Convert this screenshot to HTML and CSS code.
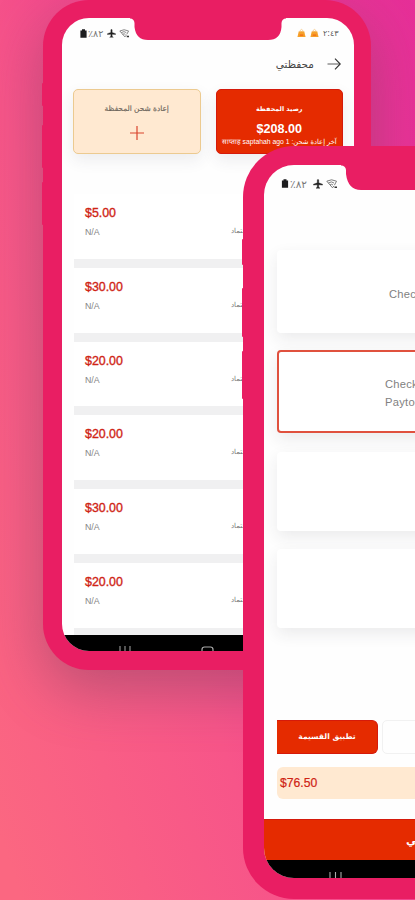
FILE: index.html
```html
<!DOCTYPE html>
<html lang="ar">
<head>
<meta charset="utf-8">
<title>محفظتي</title>
<link rel="stylesheet" href="styles.css">
</head>
<body>
<svg class="defs" width="0" height="0" aria-hidden="true">
  <symbol id="wifi" viewBox="0 0 12 10"><path d="M.8 2.200Q5.500 -.6 10.500 2.200L8.500 6M2.500 4Q5.500 1.800 8 4M4 6Q5.500 4.500 7 6M.8 2.200L6.500 8.800L8 6.800" fill="none" stroke="#666" stroke-width=".85"/><path d="M8.500 8.300H11" stroke="#333" stroke-width="1.600"/></symbol>
  <symbol id="plane" viewBox="0 0 10 10"><path d="M4.300 .8Q5 0 5.700 .8V3.800L9.500 5.200V6.100L5.700 5.700V8L7 9.200H3L4.300 8V5.700L.5 6.100V5.200L4.300 3.800Z" fill="#222" stroke="#222" stroke-width=".4"/></symbol>
  <symbol id="battery" viewBox="0 0 7 9"><path d="M2 .2H5V1.500H6.600V8.800H.4V1.500H2Z" fill="#1d1d1f"/></symbol>
  <symbol id="bag" viewBox="0 0 10 10"><path d="M2 3H8L9.500 9.500H.5Z" fill="#f6a12b"/><path d="M3.200 4V2.500Q5 -.5 6.800 2.500V4" fill="none" stroke="#f5c98a" stroke-width="1"/><path d="M3 7.300H7" stroke="#f36a16" stroke-width="1.500"/></symbol>
</svg>

<main class="stage">
  <section class="phone wallet">
    <i class="key k1"></i><i class="key k2"></i><i class="key k3"></i>
    <div class="screen">
      <svg class="notch" width="156" height="23" viewBox="0 0 156 23"><path d="M0 0H156V.5Q152 .5 151.500 5V9Q150.500 22 138 22H18Q6 22 4.500 9V5Q4 .5 0 .5Z" fill="#e91e63"/></svg>
      <div class="status">
        <div class="status-left"><svg class="i-bat"><use href="#battery"/></svg><span class="pct">٪٨٢</span><svg class="i-plane"><use href="#plane"/></svg><svg class="i-wifi"><use href="#wifi"/></svg></div>
        <div class="status-right"><svg class="i-bag"><use href="#bag"/></svg><svg class="i-bag"><use href="#bag"/></svg><span class="clock">٢:٤٣</span></div>
      </div>
      <header class="title">
        <span class="title-text" dir="rtl">محفظتي</span>
        <svg width="14" height="12" viewBox="0 0 14 12" fill="none" stroke="#333"><path d="M.5 6H13" stroke-width=".8"/><path d="M8 .7L13.200 6L8 11.300" stroke-width="1.150"/></svg>
      </header>
      <div class="tiles">
        <div class="tile topup">
          <span class="tile-label" dir="rtl">إعادة شحن المحفظة</span>
          <svg class="plus" width="14" height="14" viewBox="0 0 14 14"><path d="M7 0V14M0 7H14" stroke="#d9442c" stroke-width="1.200"/></svg>
        </div>
        <div class="tile balance">
          <span class="balance-label" dir="rtl">رصيد المحفظة</span>
          <strong>$208.00</strong>
          <span class="balance-note"><span class="note-text" dir="rtl">آخر إعادة شحن: 1 साप्ताह saptahah ago</span></span>
        </div>
      </div>
      <div class="list">
        <article class="row"><div><b>$5.00</b><small>N/A</small></div><span class="kind" dir="rtl">اعتماد</span></article>
        <article class="row"><div><b>$30.00</b><small>N/A</small></div><span class="kind" dir="rtl">اعتماد</span></article>
        <article class="row"><div><b>$20.00</b><small>N/A</small></div><span class="kind" dir="rtl">اعتماد</span></article>
        <article class="row"><div><b>$20.00</b><small>N/A</small></div><span class="kind" dir="rtl">اعتماد</span></article>
        <article class="row"><div><b>$30.00</b><small>N/A</small></div><span class="kind" dir="rtl">اعتماد</span></article>
        <article class="row"><div><b>$20.00</b><small>N/A</small></div><span class="kind" dir="rtl">اعتماد</span></article>
      </div>
      <nav class="sysbar">
        <svg width="12" height="6" viewBox="0 0 12 6"><path d="M1 0V6M6 0V6M11 0V6" stroke="#999" stroke-width="1.100"/></svg>
        <svg class="home" width="13" height="6" viewBox="0 0 13 6"><path d="M1 6V3.500Q1 1 3.500 1H9.500Q12 1 12 3.500V6" stroke="#aaa" stroke-width="1.200" fill="none"/></svg>
      </nav>
    </div>
  </section>

  <section class="phone checkout">
    <i class="key k1"></i><i class="key k2"></i><i class="key k3"></i>
    <div class="screen">
      <svg class="notch" width="174" height="26" viewBox="0 0 174 26"><path d="M0 0H174V.5Q169 .5 168.500 5V9Q167 25 153 25H20Q7 25 5 9V5Q4.500 .5 0 .5Z" fill="#e91e63"/></svg>
      <div class="status">
        <div class="status-left"><svg class="i-bat"><use href="#battery"/></svg><span class="pct">٪٨٢</span><svg class="i-plane"><use href="#plane"/></svg><svg class="i-wifi"><use href="#wifi"/></svg></div>
      </div>
      <div class="methods">
        <div class="method first"><span>Check</span></div>
        <div class="method chosen"><span>Check<br>Paytoo</span></div>
        <div class="method third"></div>
        <div class="method fourth"></div>
      </div>
      <div class="coupon"><button dir="rtl"><span>تطبيق القسيمة</span></button><div class="field"></div></div>
      <div class="total">$76.50</div>
      <div class="next"><span dir="rtl">التالي</span></div>
      <nav class="sysbar"><svg width="13" height="7" viewBox="0 0 13 7"><path d="M1 0V7M6.500 0V7M12 0V7" stroke="#aaa" stroke-width="1.100"/></svg></nav>
    </div>
  </section>
</main>
</body>
</html>
```
FILE: styles.css
```css
* { box-sizing: border-box; }
body { margin: 0; font-family: "Liberation Sans", "DejaVu Sans", sans-serif; color: #777; }
.defs { position: absolute; }
.stage {
  position: relative; width: 415px; height: 900px; overflow: hidden;
  background: linear-gradient(71deg, #fb6781 3%, #f75589 38%, #ee3c92 68%, #e62f98 100%);
}
.phone { position: absolute; background: #e91e63; }
.wallet {
  left: 43px; top: 0; width: 328px; height: 670px; padding: 18px 17px 19px 19px;
  border-radius: 46px; box-shadow: 0 20px 56px rgba(125, 70, 95, .48);
}
.checkout {
  left: 243px; top: 146px; width: 376px; height: 753px; padding: 19px 20px 21px 21px;
  border-radius: 51px;
}
.key { position: absolute; width: 4px; left: -1.500px; border-radius: 1px; background: #e91e63; }
.wallet .k1 { top: 83px; height: 23px; }
.wallet .k2 { top: 125px; height: 43px; }
.wallet .k3 { top: 182px; height: 43px; }
.checkout .k1 { top: 93px; height: 26px; }
.checkout .k2 { top: 142px; height: 49px; }
.checkout .k3 { top: 205px; height: 48px; }
.screen {
  position: relative; height: 100%; overflow: hidden; background: #fefefe;
  display: flex; flex-direction: column; border-radius: 27px;
}
.checkout .screen { border-radius: 30px; }
.notch { position: absolute; top: 0; left: 68px; }
.checkout .notch { left: 77px; }

.status { display: flex; justify-content: space-between; height: 30px; padding: 0 15px 0 18px; flex: none; }
.status-left, .status-right { display: flex; align-items: center; height: 30px; }
.i-bat { width: 7px; height: 9px; }
.pct { font: 9.500px "DejaVu Sans", sans-serif; width: 18px; margin-left: 1px; color: #777; white-space: nowrap; letter-spacing: .6px; }
.i-plane { width: 9px; height: 9px; margin-left: 1px; }
.i-wifi { width: 11px; height: 9px; margin-left: 3px; }
.i-bag { width: 9px; height: 10px; margin-right: 4px; }
.clock { font: 8px "DejaVu Sans", sans-serif; color: #555; width: 16px; white-space: nowrap; }

.title { display: flex; justify-content: flex-end; align-items: center; gap: 13px; height: 31px; padding-right: 13px; flex: none; }
.title-text { font: 10.500px/18px "DejaVu Sans", sans-serif; color: #444; }
.tiles { display: flex; gap: 15px; margin: 10px 11px 0; height: 65px; flex: none; }
.tile {
  flex: 1; min-width: 0; border-radius: 5px; display: flex; flex-direction: column; align-items: center;
  box-shadow: 0 6px 16px rgba(60, 60, 80, .09);
}
.topup { background: #ffe9d1; border: 1px solid #ecca90; padding-top: 11px; gap: 10px; }
.tile-label { font: 7.400px/15px "DejaVu Sans", sans-serif; color: #6c645b; -webkit-text-stroke: .15px #6c645b; }
.balance { background: #e52b00; border: 1px solid #d51a0a; color: #fff; padding-top: 12px; }
.balance-label { font: bold 6.400px/15px "DejaVu Sans", sans-serif; }
.balance strong { font-size: 12.600px; line-height: 14px; margin-top: 5px; }
.balance-note { width: 115px; height: 12px; display: flex; justify-content: center; }
.note-text { font: 6.800px/12px "Liberation Sans", "DejaVu Sans", sans-serif; white-space: nowrap; }

.list { margin: 40px 0 0 12px; flex: none; }
.row {
  height: 73.800px; display: flex; justify-content: space-between; padding: 10px 0 0 11px;
  border-bottom: 9px solid #f0f0f1; background: #fff;
}
.row b { display: block; font-size: 12.400px; font-weight: 400; line-height: 18px; color: #cf2415; -webkit-text-stroke: .35px #cf2415; }
.row small { display: block; font-size: 8.800px; line-height: 12px; margin-top: 4px; color: #858585; }
.kind { font: 7px/12px "DejaVu Sans", sans-serif; width: 123px; margin-top: 21px; color: #777; text-align: left; }
.sysbar { background: #000; display: flex; }
.wallet .sysbar { position: absolute; left: 0; right: 0; bottom: 0; height: 16px; padding: 11px 0 0 57px; gap: 70px; }

.checkout .status { height: 37px; padding-left: 17px; }
.checkout .status-left { height: 37px; }
.checkout .i-bat { width: 8px; height: 9px; }
.checkout .pct { font-size: 10.500px; width: 21px; letter-spacing: .8px; }
.checkout .i-plane { width: 10px; height: 10px; margin-left: 2px; }
.checkout .i-wifi { width: 12px; height: 10px; }
.methods { display: flex; flex-direction: column; margin: 48px 13px 0; flex: none; }
.method {
  background: #fff; border-radius: 4px; box-shadow: 0 6px 16px rgba(40, 45, 50, .09);
  display: flex; align-items: center; padding-left: 112px; font-size: 11.200px; line-height: 18px;
  letter-spacing: .25px; color: #818181;
}
.first { height: 83px; padding-top: 5px; }
.chosen { height: 83px; margin-top: 17px; border: 2px solid #e0513e; padding: 3px 0 0 106px; }
.third { height: 79px; margin-top: 19px; }
.fourth { height: 79px; margin-top: 18px; }
.coupon { display: flex; gap: 4px; margin: 92px 13px 0; height: 34px; flex: none; }
.coupon button {
  width: 101px; border: 1px solid #d51a0a; border-left: 0; padding: 0; background: #e52b00; color: #fff;
  border-radius: 0 6px 6px 0; font: bold 7.600px/18px "DejaVu Sans", sans-serif; white-space: nowrap;
}
.field { flex: 1; border: 1px solid #f1f1f1; border-radius: 5px; }
.total {
  height: 32px; margin: 13px 13px 0; padding-left: 3px; background: #ffe9d1; border-radius: 6px;
  font-size: 12.200px; line-height: 32px; color: #cf2415; -webkit-text-stroke: .2px #cf2415; flex: none;
}
.next { margin-top: 20px; height: 41px; background: #e52b00; border-top: 1px solid #d51a0a; padding: 10px 0 0 142px; flex: none; }
.next span { font: bold 11px/22px "DejaVu Sans", sans-serif; color: #fff; }
.checkout .sysbar { flex: 1; padding: 12px 0 0 65px; }
```
